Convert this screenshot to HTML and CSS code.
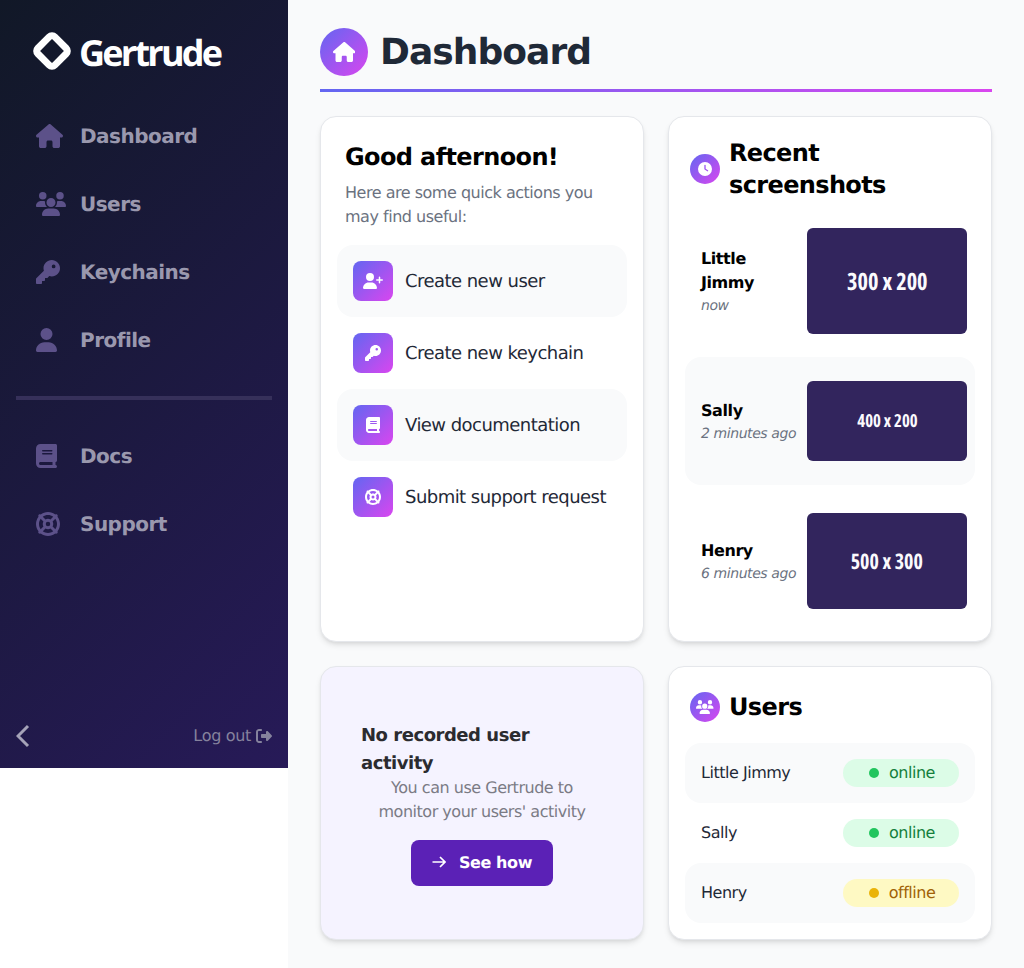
FILE: index.html
```html
<!DOCTYPE html>
<html lang="en">
<head>
    <meta charset="UTF-8">
    <meta name="viewport" content="width=device-width, initial-scale=1.0">
    <title>Gertrude - Dashboard</title>
    <link rel="stylesheet" href="styles.css">
</head>
<body>

<svg class="sprite" aria-hidden="true">
    <defs>
        <path id="i-home" d="M575.8 255.5c0 18-15 32.1-32 32.1h-32l.7 160.2c0 2.7-.2 5.4-.5 8.1V472c0 22.1-17.9 40-40 40H456c-1.1 0-2.2 0-3.3-.1c-1.4 .1-2.8 .1-4.2 .1H416 392c-22.1 0-40-17.9-40-40V448 384c0-17.7-14.3-32-32-32H256c-17.7 0-32 14.3-32 32v64 24c0 22.1-17.9 40-40 40H160 128.1c-1.5 0-3-.1-4.5-.2c-1.2 .1-2.4 .2-3.6 .2H104c-22.1 0-40-17.9-40-40V360c0-.9 0-1.9 .1-2.8V287.6H32c-18 0-32-14-32-32.1c0-9 3-17 10-24L266.4 8c7-7 15-8 22-8s15 2 21 7L564.8 231.5c8 7 12 15 11 24z"/>
        <path id="i-users" d="M144 0a80 80 0 1 1 0 160A80 80 0 1 1 144 0zM512 0a80 80 0 1 1 0 160A80 80 0 1 1 512 0zM0 298.7C0 239.8 47.8 192 106.7 192h42.7c15.9 0 31 3.5 44.6 9.7c-1.3 7.2-1.9 14.7-1.9 22.3c0 38.2 16.8 72.5 43.3 96c-.2 0-.4 0-.7 0H21.3C9.6 320 0 310.4 0 298.7zM405.3 320c-.2 0-.4 0-.7 0c26.6-23.5 43.3-57.8 43.3-96c0-7.6-.7-15-1.9-22.3c13.6-6.3 28.7-9.7 44.6-9.7h42.7C592.2 192 640 239.8 640 298.7c0 11.8-9.6 21.3-21.3 21.3H405.3zM224 224a96 96 0 1 1 192 0 96 96 0 1 1 -192 0zM128 485.3C128 411.7 187.7 352 261.3 352H378.7C452.3 352 512 411.7 512 485.3c0 14.7-11.9 26.7-26.7 26.7H154.7c-14.7 0-26.7-11.9-26.7-26.7z"/>
        <path id="i-key" d="M336 352c97.2 0 176-78.8 176-176S433.2 0 336 0S160 78.8 160 176c0 18.7 2.9 36.8 8.3 53.7L7 391c-4.5 4.5-7 10.6-7 17v80c0 13.3 10.7 24 24 24h80c13.3 0 24-10.7 24-24V448h40c13.3 0 24-10.7 24-24V384h40c6.4 0 12.5-2.5 17-7l33.3-33.3c16.9 5.4 35 8.3 53.7 8.3zM376 96a40 40 0 1 1 0 80 40 40 0 1 1 0-80z"/>
        <path id="i-user" d="M224 256A128 128 0 1 0 224 0a128 128 0 1 0 0 256zm-45.7 48C79.8 304 0 383.8 0 482.3C0 498.7 13.3 512 29.7 512H418.3c16.4 0 29.7-13.3 29.7-29.7C448 383.8 368.2 304 269.7 304H178.3z"/>
        <path id="i-book" d="M96 0C43 0 0 43 0 96V416c0 53 43 96 96 96H384h32c17.7 0 32-14.3 32-32s-14.3-32-32-32V384c17.7 0 32-14.3 32-32V32c0-17.7-14.3-32-32-32H384 96zm0 384H352v64H96c-17.7 0-32-14.3-32-32s14.3-32 32-32zm32-240c0-8.8 7.2-16 16-16H336c8.8 0 16 7.2 16 16s-7.2 16-16 16H144c-8.8 0-16-7.2-16-16zm16 48H336c8.8 0 16 7.2 16 16s-7.2 16-16 16H144c-8.8 0-16-7.2-16-16s7.2-16 16-16z"/>
        <path id="i-ring" d="M367.2 412.5C335.9 434.9 297.5 448 256 448s-79.9-13.1-111.2-35.5l58-58c15.8 8.6 34 13.5 53.3 13.5s37.4-4.9 53.3-13.5l58 58zm90.7 .8c33.8-43.4 54-98 54-157.3s-20.2-113.9-54-157.3c9-12.5 7.9-30.1-3.4-41.3S425.8 45 413.3 54C369.9 20.2 315.3 0 256 0S142.1 20.2 98.7 54c-12.5-9-30.1-7.9-41.3 3.4S45 86.2 54 98.7C20.2 142.1 0 196.7 0 256s20.2 113.9 54 157.3c-9 12.5-7.9 30.1 3.4 41.3S86.2 467 98.7 458c43.4 33.8 98 54 157.3 54s113.9-20.2 157.3-54c12.5 9 30.1 7.9 41.3-3.4s12.4-28.8 3.4-41.3zm-45.5-46.1l-58-58c8.6-15.8 13.5-34 13.5-53.3s-4.9-37.4-13.5-53.3l58-58C434.9 176.1 448 214.5 448 256s-13.1 79.9-35.5 111.2zM367.2 99.5l-58 58c-15.8-8.6-34-13.5-53.3-13.5s-37.4 4.9-53.3 13.5l-58-58C176.1 77.1 214.5 64 256 64s79.9 13.1 111.2 35.5zM157.5 309.3l-58 58C77.1 335.9 64 297.5 64 256s13.1-79.9 35.5-111.2l58 58c-8.6 15.8-13.5 34-13.5 53.3s4.9 37.4 13.5 53.3zM208 256a48 48 0 1 1 96 0 48 48 0 1 1 -96 0z"/>
        <path id="i-logout" d="M377.9 105.9L500.7 228.7c7.2 7.2 11.3 17.1 11.3 27.3s-4.1 20.1-11.3 27.3L377.9 406.1c-6.4 6.4-15 9.9-24 9.9c-18.7 0-33.9-15.2-33.9-33.9l0-62.1-128 0c-17.7 0-32-14.3-32-32l0-64c0-17.7 14.3-32 32-32l128 0 0-62.1c0-18.7 15.2-33.9 33.9-33.9c9 0 17.6 3.6 24 9.9zM160 96L96 96c-17.7 0-32 14.3-32 32l0 256c0 17.7 14.3 32 32 32l64 0c17.7 0 32 14.3 32 32s-14.3 32-32 32l-64 0c-53 0-96-43-96-96L0 128C0 75 43 32 96 32l64 0c17.7 0 32 14.3 32 32s-14.3 32-32 32z"/>
        <path id="i-clock" d="M256 0a256 256 0 1 1 0 512A256 256 0 1 1 256 0zM232 120V256c0 8 4 15.5 10.7 20l96 64c11 7.4 25.9 4.4 33.3-6.7s4.4-25.9-6.7-33.3L280 243.2V120c0-13.3-10.7-24-24-24s-24 10.7-24 24z"/>
        <path id="i-user-plus" d="M96 128a128 128 0 1 1 256 0A128 128 0 1 1 96 128zM0 482.3C0 383.8 79.8 304 178.3 304h91.4C368.2 304 448 383.8 448 482.3c0 16.4-13.3 29.7-29.7 29.7H29.7C13.3 512 0 498.7 0 482.3zM504 312V248H440c-13.3 0-24-10.7-24-24s10.7-24 24-24h64V136c0-13.3 10.7-24 24-24s24 10.7 24 24v64h64c13.3 0 24 10.7 24 24s-10.7 24-24 24H552v64c0 13.3-10.7 24-24 24s-24-10.7-24-24z"/>
    </defs>
</svg>

<div class="app">
    <aside class="sidebar">
        <div class="logo">
            <svg class="logo-mark" viewBox="0 0 38 38"><rect x="7" y="7" width="24" height="24" rx="4" transform="rotate(45 19 19)"/></svg>
            <span class="logo-text">Gertrude</span>
        </div>

        <nav class="nav">
            <a class="nav-item"><span class="nav-icon"><svg class="ico" viewBox="0 0 576 512"><use href="#i-home"/></svg></span>Dashboard</a>
            <a class="nav-item"><span class="nav-icon"><svg class="ico" viewBox="0 0 640 512"><use href="#i-users"/></svg></span>Users</a>
            <a class="nav-item"><span class="nav-icon"><svg class="ico" viewBox="0 0 512 512"><use href="#i-key"/></svg></span>Keychains</a>
            <a class="nav-item"><span class="nav-icon"><svg class="ico" viewBox="0 0 448 512"><use href="#i-user"/></svg></span>Profile</a>
        </nav>

        <div class="nav-divider"></div>

        <nav class="nav">
            <a class="nav-item"><span class="nav-icon"><svg class="ico" viewBox="0 0 448 512"><use href="#i-book"/></svg></span>Docs</a>
            <a class="nav-item"><span class="nav-icon"><svg class="ico" viewBox="0 0 512 512"><use href="#i-ring"/></svg></span>Support</a>
        </nav>

        <div class="sidebar-footer">
            <svg class="collapse" viewBox="0 0 14 24"><polyline points="12,2 2,12 12,22"/></svg>
            <a class="logout"><span class="logout-label">Log out</span> <svg class="ico" viewBox="0 0 512 512"><use href="#i-logout"/></svg></a>
        </div>
    </aside>

    <main class="main">
        <header class="page-header">
            <span class="page-icon"><svg class="ico" viewBox="0 0 576 512"><use href="#i-home"/></svg></span>
            <h1>Dashboard</h1>
        </header>
        <div class="page-rule"></div>

        <div class="grid">
            <section class="card">
                <h2 class="greeting">Good afternoon!</h2>
                <p class="greeting-sub">Here are some quick actions you may find useful:</p>
                <a class="action shaded"><span class="action-icon"><svg class="ico" viewBox="0 0 640 512"><use href="#i-user-plus"/></svg></span>Create new user</a>
                <a class="action"><span class="action-icon"><svg class="ico" viewBox="0 0 512 512"><use href="#i-key"/></svg></span>Create new keychain</a>
                <a class="action shaded"><span class="action-icon"><svg class="ico" viewBox="0 0 448 512"><use href="#i-book"/></svg></span>View documentation</a>
                <a class="action"><span class="action-icon"><svg class="ico" viewBox="0 0 512 512"><use href="#i-ring"/></svg></span>Submit support request</a>
            </section>

            <section class="card">
                <div class="card-header recent-header">
                    <span class="card-icon"><svg class="ico" viewBox="0 0 512 512"><use href="#i-clock"/></svg></span>
                    <h2>Recent screenshots</h2>
                </div>
                <div class="shot shot-tall">
                    <div class="shot-info">
                        <div class="shot-name">Little Jimmy</div>
                        <div class="shot-time">now</div>
                    </div>
                    <div class="thumb thumb-300"><span>300 x 200</span></div>
                </div>
                <div class="shot shot-short shaded">
                    <div class="shot-info">
                        <div class="shot-name">Sally</div>
                        <div class="shot-time">2 minutes ago</div>
                    </div>
                    <div class="thumb thumb-400"><span>400 x 200</span></div>
                </div>
                <div class="shot shot-tall">
                    <div class="shot-info">
                        <div class="shot-name">Henry</div>
                        <div class="shot-time">6 minutes ago</div>
                    </div>
                    <div class="thumb thumb-500"><span>500 x 300</span></div>
                </div>
            </section>

            <section class="card card-empty">
                <h3>No recorded user activity</h3>
                <p>You can use Gertrude to monitor your users' activity</p>
                <a class="btn">
                    <svg class="btn-arrow" viewBox="0 0 14 12"><path d="M.5 6h12.5M8 1l5 5-5 5"/></svg>
                    See how
                </a>
            </section>

            <section class="card">
                <div class="card-header">
                    <span class="card-icon"><svg class="ico" viewBox="0 0 640 512"><use href="#i-users"/></svg></span>
                    <h2>Users</h2>
                </div>
                <div class="user-row shaded">
                    <span class="user-name">Little Jimmy</span>
                    <span class="pill pill-online"><i class="dot"></i>online</span>
                </div>
                <div class="user-row">
                    <span class="user-name">Sally</span>
                    <span class="pill pill-online"><i class="dot"></i>online</span>
                </div>
                <div class="user-row shaded">
                    <span class="user-name">Henry</span>
                    <span class="pill pill-offline"><i class="dot"></i>offline</span>
                </div>
            </section>
        </div>
    </main>
</div>

</body>
</html>
```

FILE: styles.css
```css
* {
    box-sizing: border-box;
    letter-spacing: -0.03em;
}
h1, h2, h3, .nav-item, .shot-name, .btn {
    letter-spacing: -0.026em;
}
body {
    font-family: 'DejaVu Sans', sans-serif;
    text-rendering: geometricPrecision;
    margin: 0;
    padding: 0;
    background-color: #fff;
    color: #1f2937;
}
.sprite {
    display: none;
}
.ico {
    display: block;
    height: 1em;
    width: auto;
    fill: currentColor;
}
.app {
    display: flex;
    align-items: flex-start;
}

/* sidebar */
.sidebar {
    width: 288px;
    height: 768px;
    flex-shrink: 0;
    display: flex;
    flex-direction: column;
    background: linear-gradient(135deg, #111827, #271a58);
}
.logo {
    display: flex;
    align-items: center;
    gap: 8px;
    height: 102px;
    padding: 0 0 0 33px;
    color: #fff;
}
.logo-mark {
    width: 38px;
    height: 38px;
    fill: none;
    stroke: #fff;
    stroke-width: 7;
}
.logo-text {
    padding-top: 2px;
    font-family: 'Open Sans', sans-serif;
    font-size: 36px;
    font-weight: 700;
    letter-spacing: -2.75px;
}
.nav-item {
    display: flex;
    align-items: center;
    height: 68px;
    padding-left: 36px;
    font-size: 20px;
    font-weight: 700;
    color: #9a98ae;
}
.nav-icon {
    width: 44px;
    font-size: 24px;
    color: #5c5189;
}
.nav-divider {
    height: 4px;
    margin: 22px 16px;
    background-color: #36305a;
}
.sidebar-footer {
    margin-top: auto;
    padding: 0 16px 16px;
    height: 48px;
    display: flex;
    align-items: center;
    justify-content: space-between;
}
.collapse {
    width: 14px;
    height: 24px;
    fill: none;
    stroke: #a5a3b8;
    stroke-width: 3;
}
.logout {
    display: flex;
    align-items: center;
    gap: 5px;
    font-size: 16px;
    color: #85829d;
}
.logout-label {
    padding-bottom: 2px;
    letter-spacing: -0.02em;
}

/* main */
.main {
    flex: 1;
    height: 968px;
    padding: 28px 32px;
    background-color: #f9fafb;
}
.page-header {
    display: flex;
    align-items: center;
    gap: 12px;
}
.page-icon {
    width: 48px;
    height: 48px;
    border-radius: 50%;
    display: flex;
    align-items: center;
    justify-content: center;
    font-size: 20px;
    color: #fff;
    background: linear-gradient(135deg, #6366f1, #d946ef);
}
.page-header h1 {
    margin: 0;
    padding-top: 2px;
    font-size: 36px;
    line-height: 46px;
    font-weight: 700;
    color: #1f2937;
}
.page-rule {
    height: 3px;
    margin-top: 13px;
    background: linear-gradient(90deg, #6366f1, #d946ef);
}
.grid {
    display: grid;
    grid-template-columns: 324px 324px;
    grid-template-rows: 526px 274px;
    gap: 24px;
    margin-top: 24px;
}
.card {
    background-color: #fff;
    border: 1px solid #e5e7eb;
    border-radius: 16px;
    padding: 16px;
    box-shadow: 0 4px 6px -1px rgba(0, 0, 0, 0.1), 0 2px 4px -2px rgba(0, 0, 0, 0.1);
}
.shaded {
    background-color: #f9fafb;
}

/* quick actions */
.greeting {
    margin: 8px 8px 0;
    font-size: 24px;
    line-height: 32px;
    font-weight: 700;
    color: #000;
}
.greeting-sub {
    margin: 8px 8px 16px;
    font-size: 16px;
    line-height: 24px;
    color: #6b7280;
}
.action {
    display: flex;
    align-items: center;
    gap: 12px;
    height: 72px;
    padding: 0 16px;
    border-radius: 16px;
    font-size: 18px;
    color: #1f2937;
}
.action-icon {
    width: 40px;
    height: 40px;
    border-radius: 8px;
    display: flex;
    align-items: center;
    justify-content: center;
    font-size: 16px;
    color: #fff;
    background: linear-gradient(135deg, #6366f1, #d946ef);
}

/* card headers */
.card-header {
    display: flex;
    align-items: center;
    gap: 9px;
    margin: 8px 0 20px 5px;
}
.recent-header {
    margin: 4px 0 8px 5px;
}
.card-header h2 {
    margin: 0;
    font-size: 24px;
    line-height: 32px;
    font-weight: 700;
    color: #000;
}
.card-icon {
    width: 30px;
    height: 30px;
    flex-shrink: 0;
    border-radius: 50%;
    display: flex;
    align-items: center;
    justify-content: center;
    font-size: 14px;
    color: #fff;
    background: linear-gradient(135deg, #6366f1, #d946ef);
}

/* screenshots */
.shot {
    display: flex;
    align-items: center;
    justify-content: space-between;
    padding: 0 8px 0 16px;
    margin-bottom: 4px;
    border-radius: 16px;
}
.shot-tall {
    height: 144px;
}
.shot-short {
    height: 128px;
}
.shot-info {
    width: 96px;
    padding-top: 2px;
}
.shot-name {
    font-size: 16px;
    line-height: 24px;
    font-weight: 700;
    color: #000;
}
.shot-time {
    font-size: 14px;
    line-height: 22px;
    font-style: italic;
    color: #6b7280;
    white-space: nowrap;
}
.thumb {
    width: 160px;
    border-radius: 6px;
    display: flex;
    align-items: center;
    justify-content: center;
    font-family: 'Open Sans', sans-serif;
    font-stretch: 75%;
    font-weight: 700;
    color: #fbfafd;
    background-color: #32255d;
}
.thumb span {
    display: block;
    letter-spacing: 0;
    transform: scaleX(0.93);
}
.thumb-300 {
    height: 106px;
    font-size: 24px;
}
.thumb-400 {
    height: 80px;
    font-size: 18px;
}
.thumb-500 {
    height: 96px;
    font-size: 21.5px;
}

/* empty activity card */
.card-empty {
    background-color: #f5f3ff;
    padding: 40px;
    display: flex;
    flex-direction: column;
    justify-content: center;
    align-items: center;
}
.card-empty h3 {
    margin: 0 0 -2px;
    padding-top: 2px;
    width: 100%;
    font-size: 18px;
    line-height: 28px;
    font-weight: 700;
    color: #2b2b2f;
}
.card-empty p {
    margin: 0 0 16px;
    font-size: 16px;
    line-height: 24px;
    text-align: center;
    color: #7b7b85;
}
.btn {
    display: flex;
    align-items: center;
    gap: 13px;
    height: 46px;
    padding: 0 21px 2px;
    border-radius: 8px;
    font-size: 16px;
    font-weight: 700;
    color: #fff;
    background-color: #5b21b6;
}
.btn-arrow {
    width: 14px;
    height: 12px;
    fill: none;
    stroke: #fff;
    stroke-width: 1.7;
}

/* users */
.user-row {
    display: flex;
    align-items: center;
    justify-content: space-between;
    height: 60px;
    padding: 0 16px;
    border-radius: 16px;
    font-size: 16px;
    color: #1f2937;
}
.user-name {
    padding-bottom: 2px;
}
.pill {
    width: 116px;
    height: 28px;
    padding: 0 0 2px 2px;
    border-radius: 14px;
    display: flex;
    align-items: center;
    justify-content: center;
    gap: 10px;
    font-size: 16px;
}
.dot {
    width: 10px;
    height: 10px;
    margin-top: 2px;
    border-radius: 50%;
}
.pill-online {
    background-color: #dcfce7;
    color: #15803d;
}
.pill-online .dot {
    background-color: #22c55e;
}
.pill-offline {
    background-color: #fef9c3;
    color: #a16207;
}
.pill-offline .dot {
    background-color: #eab308;
}
```
